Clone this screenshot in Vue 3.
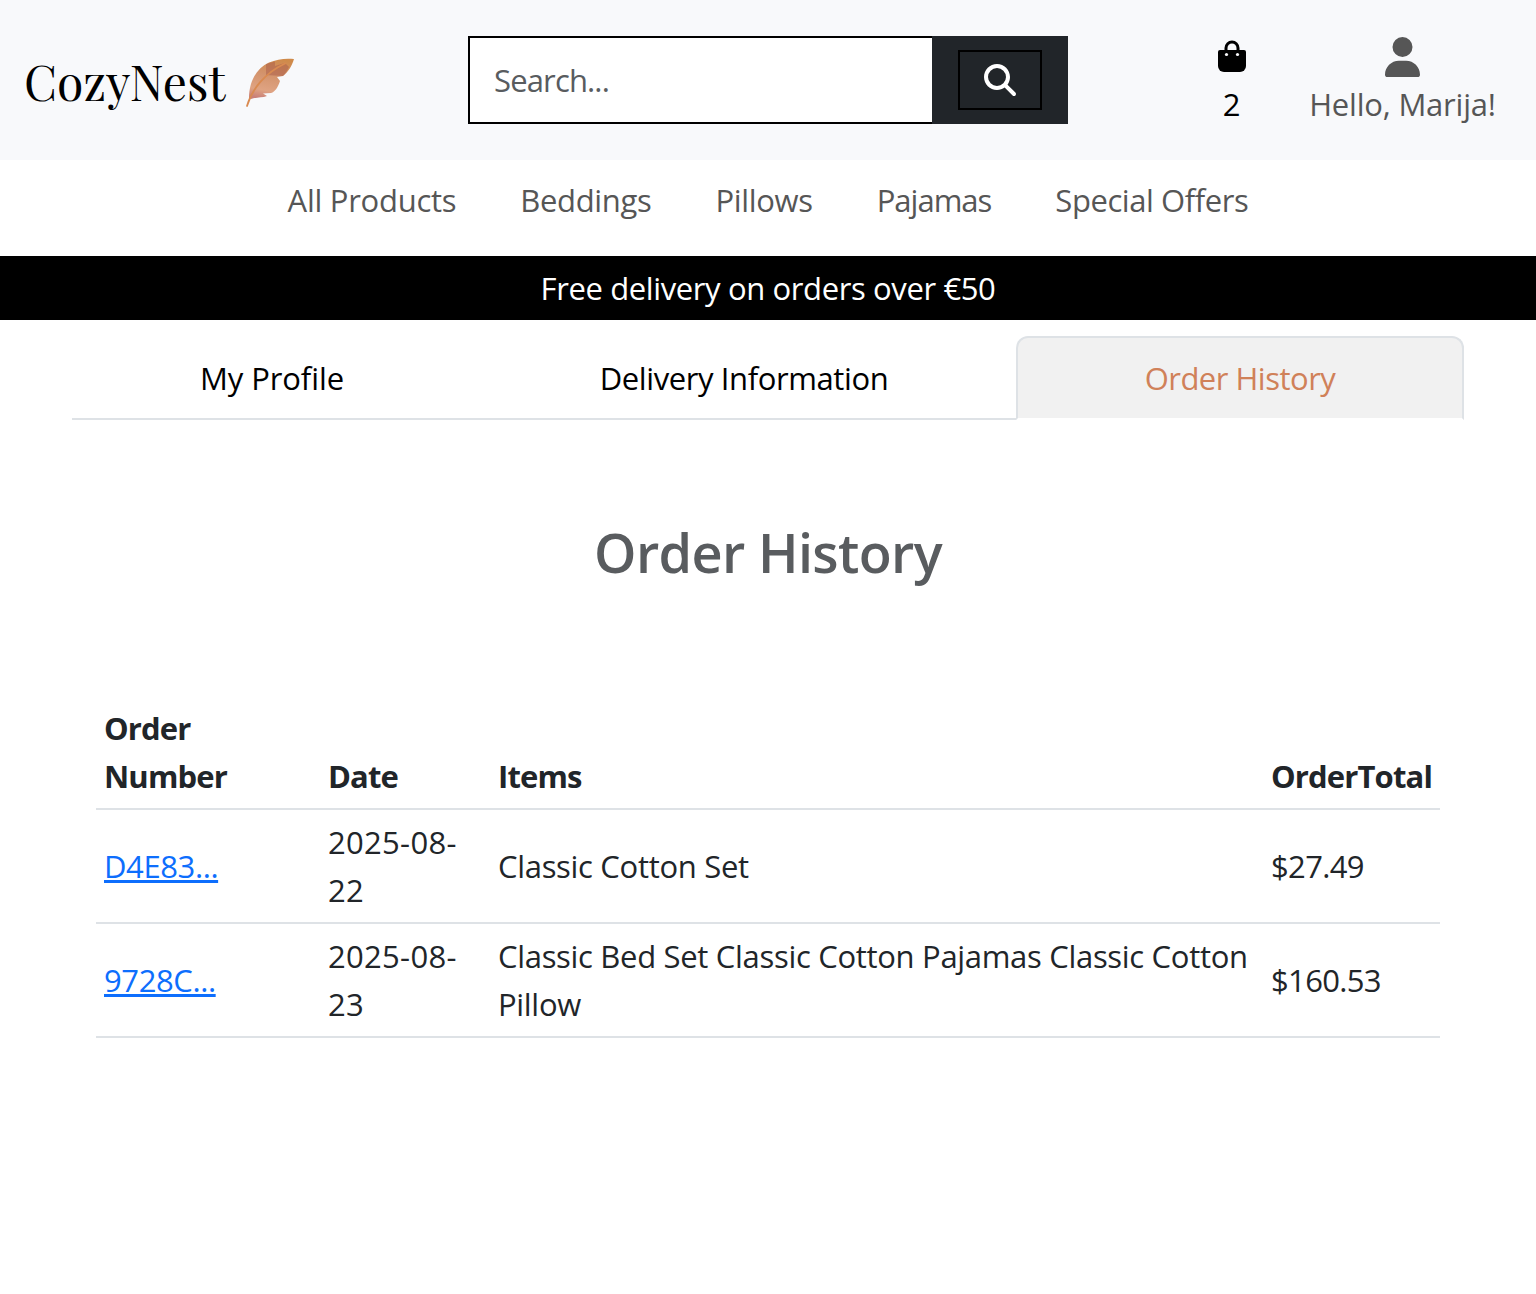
<script setup>
const links = [
  { label: 'All Products', cls: 'snug' },
  { label: 'Beddings', cls: 'even' },
  { label: 'Pillows', cls: 'even' },
  { label: 'Pajamas', cls: 'tightest' },
  { label: 'Special Offers', cls: 'tight' },
]
const orders = [
  { id: 'D4E83...', date: '2025-08-22', items: 'Classic Cotton Set', total: '$27.49' },
  { id: '9728C...', date: '2025-08-23', items: 'Classic Bed Set Classic Cotton Pajamas Classic Cotton Pillow', total: '$160.53' },
]
</script>

<template>
  <div class="page">
    <header class="header">
      <a class="brand"><span>CozyNest</span>
        <svg class="feather" viewBox="0 0 50 50">
          <defs>
            <linearGradient id="leaf" x1="0.6" y1="0" x2="0.4" y2="1">
              <stop offset="0" stop-color="#cf8a4a" /><stop offset="0.4" stop-color="#d3936c" /><stop offset="0.8" stop-color="#dfa382" /><stop offset="1" stop-color="#c98078" />
            </linearGradient>
          </defs>
          <path d="M4 40C4 23 12 10 24 4.500C32 1 41 0 49 1C47 8 43 14 38 18L32 19L35 23C33 29 30 34 26 35L18 35.500L22 38C17 40 11 39 6 41Z" fill="url(#leaf)" />
          <path d="M21 6L30 3.500V8L40 5L44 9C42 13 40 16 38 18L21 17Z" fill="#a95b4a" opacity=".5" />
          <path d="M2 48C7 31 20 15 40 5.500" fill="none" stroke="#d98a50" stroke-width="1.800" stroke-linecap="round" />
        </svg>
      </a>
      <form class="search">
        <input type="text" placeholder="Search..." />
        <div class="search-side">
          <button type="button" aria-label="Search">
            <svg viewBox="0 0 512 512" width="32" height="32"><path fill="#fff" d="M416 208c0 45.900-14.900 88.300-40 122.700L502.600 457.400c12.500 12.500 12.500 32.800 0 45.300s-32.800 12.500-45.300 0L330.700 376c-34.400 25.200-76.800 40-122.700 40C93.100 416 0 322.900 0 208S93.100 0 208 0S416 93.100 416 208zM208 352a144 144 0 1 0 0-288 144 144 0 1 0 0 288z" /></svg>
          </button>
        </div>
      </form>
      <a class="cart">
        <svg viewBox="0 0 28 32" width="28" height="32"><path d="M8 12V8a6 6 0 0 1 12 0v4" fill="none" stroke="#000" stroke-width="3" /><path d="M2 10H26a2 2 0 0 1 2 2V26a6 6 0 0 1-6 6H6a6 6 0 0 1-6-6V12a2 2 0 0 1 2-2Z" /><circle cx="8.500" cy="14.500" r="1.600" fill="#f8f9fa" /><circle cx="19.500" cy="14.500" r="1.600" fill="#f8f9fa" /></svg>
        <span>2</span>
      </a>
      <a class="user">
        <svg viewBox="0 0 448 512" width="35" height="40"><path fill="#565656" d="M224 256A128 128 0 1 0 224 0a128 128 0 1 0 0 256zm-45.700 48C79.800 304 0 383.800 0 482.300C0 498.700 13.300 512 29.700 512H418.300c16.400 0 29.700-13.300 29.700-29.700C448 383.800 368.200 304 269.700 304H178.300z" /></svg>
        <span>Hello, Marija!</span>
      </a>
    </header>
    <nav class="links"><a v-for="l in links" :key="l.label" :class="l.cls">{{ l.label }}</a></nav>
    <div class="banner">Free delivery on orders over €50</div>
    <ul class="tabs">
      <li class="t1">My Profile</li>
      <li class="t2">Delivery Information</li>
      <li class="t3 active">Order History</li>
    </ul>
    <h3>Order History</h3>
    <table>
      <colgroup><col class="c1" /><col class="c2" /><col class="c3" /><col class="c4" /></colgroup>
      <thead><tr><th>Order Number</th><th>Date</th><th>Items</th><th>OrderTotal</th></tr></thead>
      <tbody>
        <tr v-for="o in orders" :key="o.id"><td><a>{{ o.id }}</a></td><td class="date">{{ o.date }}</td><td class="items">{{ o.items }}</td><td class="total">{{ o.total }}</td></tr>
      </tbody>
    </table>
  </div>
</template>

<style>
body { margin: 0; background: #fff; }
</style>
<style scoped>
* { box-sizing: border-box; }
.page { font: 400 31px/48px "Segoe UI", "Open Sans", "Noto Sans", sans-serif; color: #212529; min-height: 1294px; }
.header { height: 160px; background: #f8f9fb; display: flex; }
.brand { width: 468px; padding: 55px 0 0 24px; display: flex; font: 48px/52px "Playfair Display", "Liberation Serif", serif; color: #000; }
.feather { width: 50px; height: 50px; margin: 3px 0 0 19.5px; }
.search { display: flex; width: 600px; height: 88px; margin-top: 36px; }
.search input { width: 464px; border: 2px solid #000; border-right: 0; padding: 0 24px; font: inherit; letter-spacing: -0.85px; background: #fff; }
.search input::placeholder { color: #595c5f; opacity: 1; }
.search-side { width: 136px; background: #212529; display: flex; align-items: center; justify-content: center; }
.search-side button { width: 84px; height: 60px; border: 2px solid #000; background: none; display: flex; align-items: center; justify-content: center; padding: 0; }
.cart { margin: 40px 0 0 133.5px; width: 60px; display: flex; flex-direction: column; align-items: center; color: #000; }
.cart span { margin-top: 8px; }
.user { margin: 37px 0 0 31px; width: 220px; display: flex; flex-direction: column; align-items: center; color: #565656; letter-spacing: -0.2px; }
.user span { margin-top: 3px; }
.links { height: 96px; padding-top: 16px; display: flex; justify-content: center; gap: 64px; color: #565656; }
.even { letter-spacing: -0.33px; }
.snug { letter-spacing: -0.27px; }
.tight { letter-spacing: -0.42px; }
.tightest { letter-spacing: -1px; }
.banner { height: 64px; background: #000; color: #fff; text-align: center; line-height: 64px; letter-spacing: -0.38px; }
.tabs { list-style: none; margin: 16px 72px 0; padding: 0; display: flex; height: 84px; border-bottom: 2px solid #dee2e6; color: #000; text-align: center; line-height: 80px; }
.tabs li { border: 2px solid transparent; border-radius: 12px 12px 0 0; height: 84px; }
.t1 { width: 400px; letter-spacing: -0.1px; }
.t2 { width: 544px; letter-spacing: -0.4px; }
.t3 { width: 448px; letter-spacing: -0.5px; }
.tabs .active { background: #f1f1f1; color: #d08159; border-color: #dee2e6 #dee2e6 #fff; }
h3 { margin: 99px 0 0; font-size: 54px; font-weight: 600; line-height: 67px; letter-spacing: -0.65px; color: #595c5f; text-align: center; }
table { width: 1344px; margin: 110px 96px 0; border-collapse: collapse; table-layout: fixed; }
.c1 { width: 224px; }
.c2 { width: 170px; }
.c3 { width: 773px; }
.c4 { width: 177px; }
th, td { padding: 8px; border-bottom: 2px solid #dee2e6; text-align: left; vertical-align: middle; }
th { font-weight: 700; vertical-align: bottom; letter-spacing: -0.85px; }
td a { color: #0d6efd; text-decoration: underline; letter-spacing: -0.4px; }
.date { letter-spacing: 0.3px; }
.items { letter-spacing: -0.31px; }
.total { letter-spacing: -0.65px; }
</style>
